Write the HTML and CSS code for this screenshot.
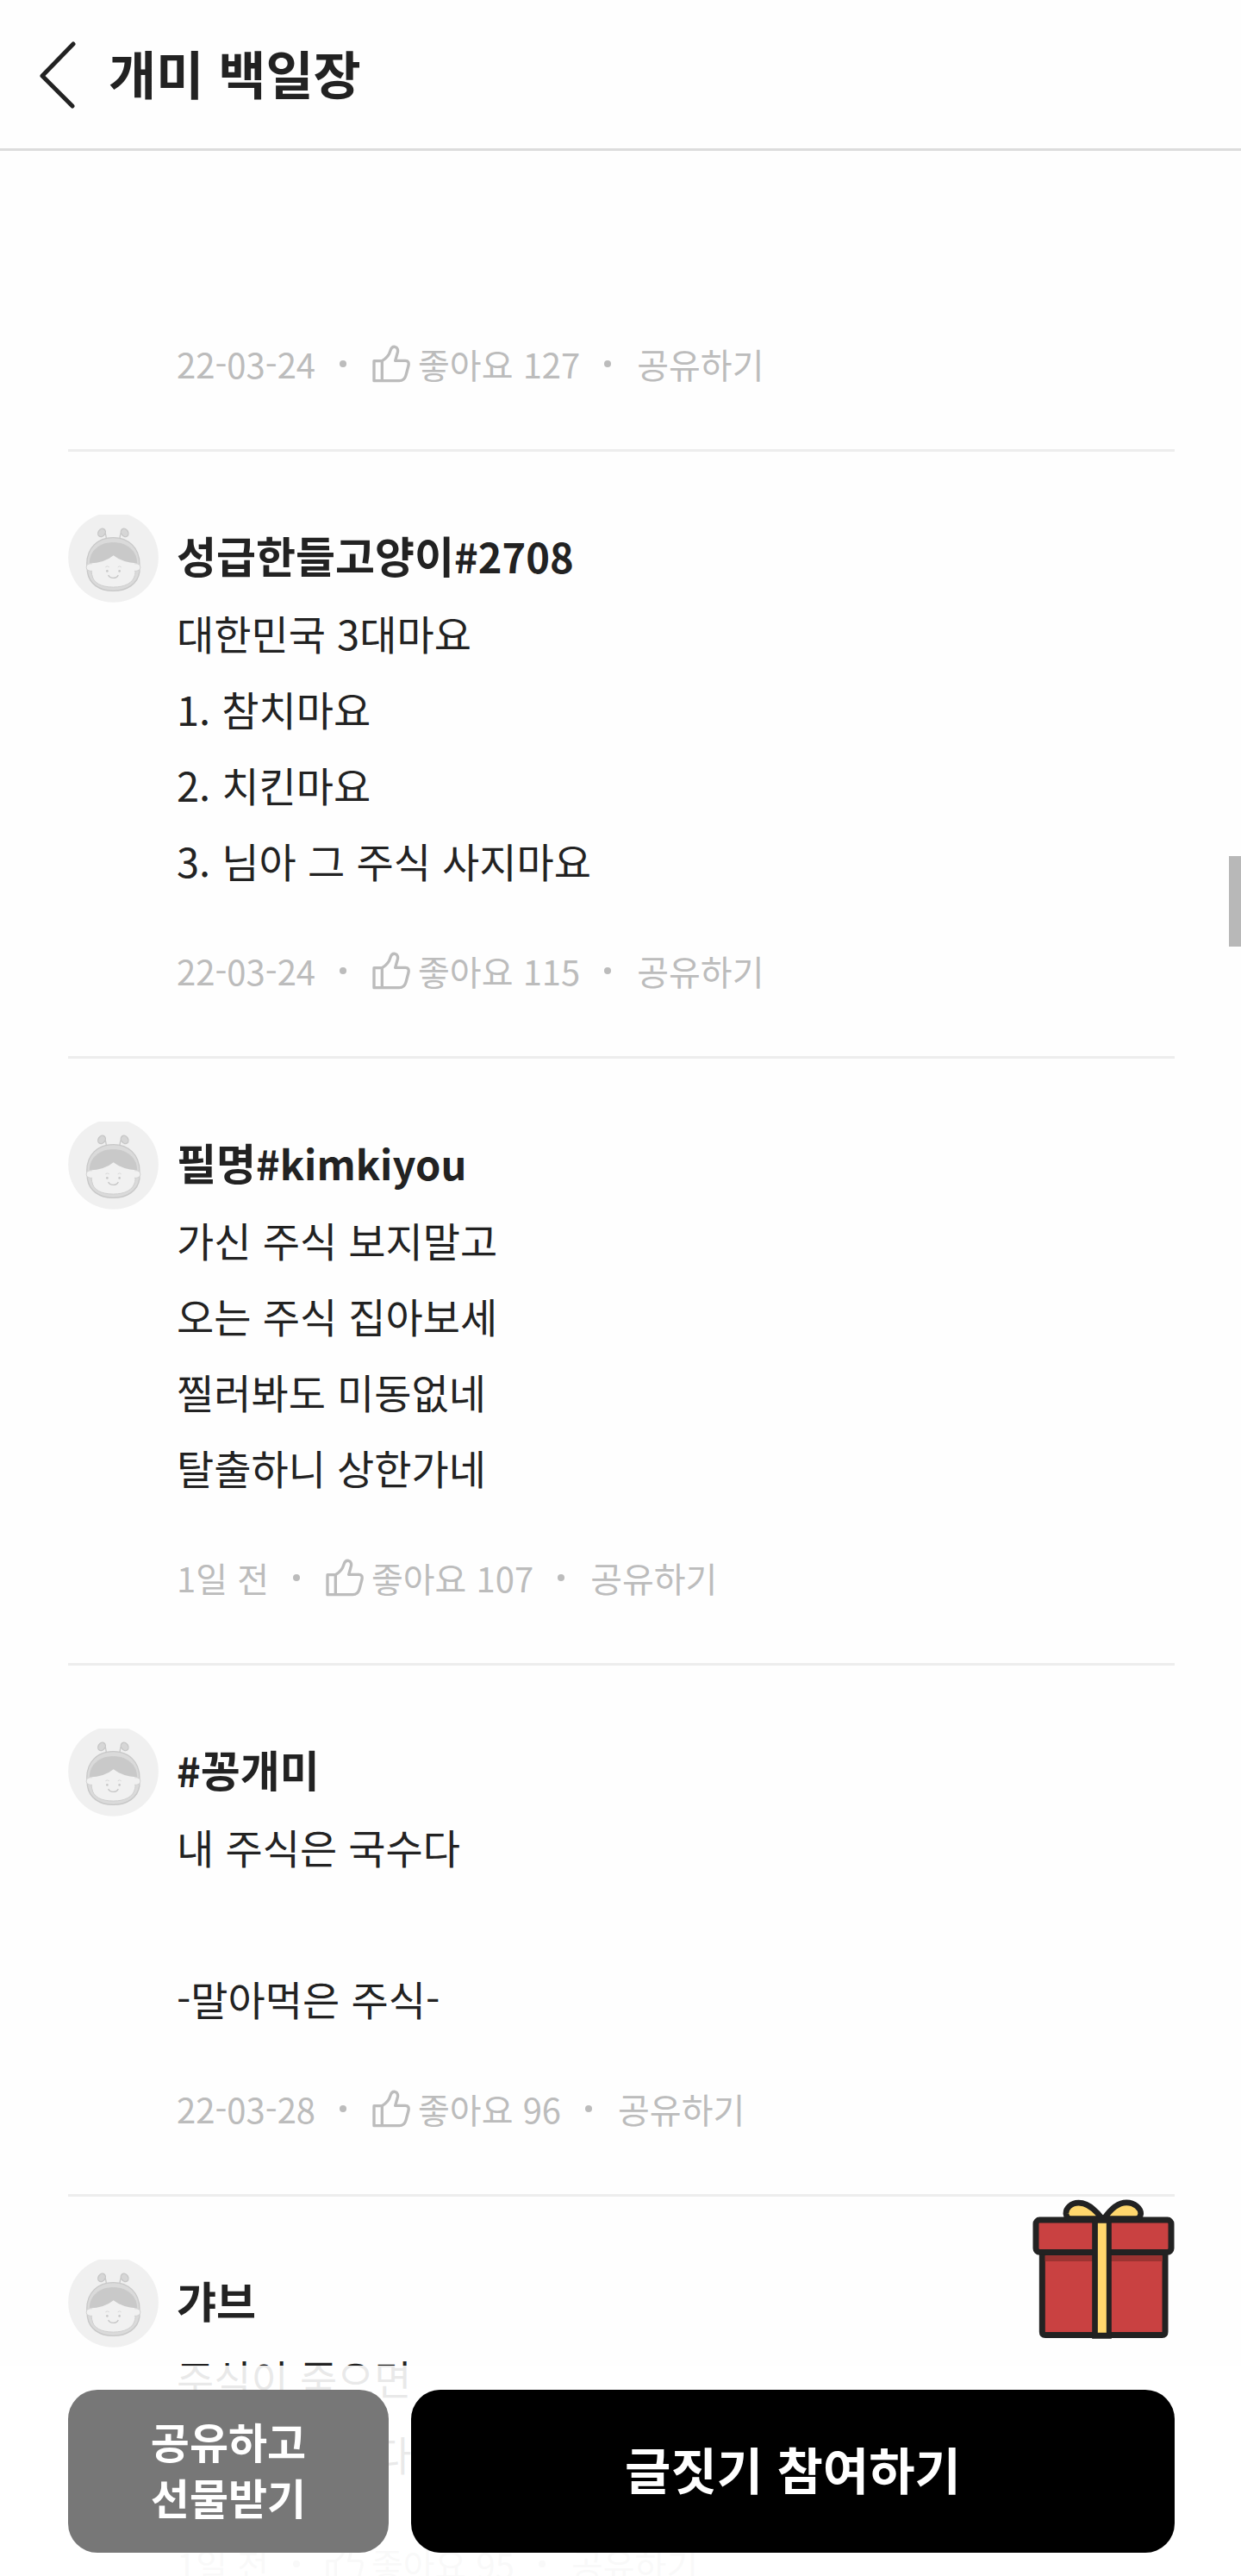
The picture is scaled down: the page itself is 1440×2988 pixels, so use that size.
FILE: index.html
```html
<!DOCTYPE html>
<html lang="ko">
<head>
<meta charset="utf-8">
<meta name="viewport" content="width=device-width, initial-scale=1">
<title>개미 백일장</title>
<link rel="stylesheet" href="styles.css">
</head>
<body>
<svg class="sprite" aria-hidden="true">
  <symbol id="avatar" viewBox="57 80 315 307">
    <circle cx="214.500" cy="229" r="157.500" fill="#f0f0f0"/>
    <path d="M190 170Q190 150 184 140M237 170Q237 150 243 140" fill="none" stroke="#c9c9c9" stroke-width="4"/>
    <ellipse cx="174" cy="143" rx="12" ry="15" transform="rotate(35 174 143)" fill="#d6d6d6" stroke="#c6c6c6" stroke-width="4"/>
    <ellipse cx="254" cy="143" rx="12" ry="15" transform="rotate(-35 254 143)" fill="#d6d6d6" stroke="#c6c6c6" stroke-width="4"/>
    <path d="M122 252C122 196 160 160 214 160S306 196 306 252V280C300 322 262 346 214 346S130 322 124 280Z" fill="#dadada" stroke="#c8c8c8" stroke-width="4"/>
    <path d="M133 250C133 200 170 178 214 178S296 200 296 250L290 290C284 318 256 333 214 333S144 318 140 290Z" fill="#f1f1f1" stroke="#cfcfcf" stroke-width="3"/>
    <path d="M131 250C133 202 170 177 214 177S296 202 298 250Q245 246 215 222Q184 248 131 250Z" fill="#c9c9c9"/>
    <path d="M140 251Q121 249 120 264Q121 277 141 277M289 251Q308 249 309 264Q308 277 288 277" fill="#f1f1f1" stroke="#d2d2d2" stroke-width="3"/>
    <path d="M187 263Q193 257 200 263M230 263Q236 257 242 263" fill="none" stroke="#d6d6d6" stroke-width="3"/>
    <circle cx="193" cy="277" r="4" fill="#c8c8c8"/><circle cx="236" cy="277" r="4" fill="#c8c8c8"/>
    <path d="M197 291Q201 301 214 301T232 291" fill="none" stroke="#c6c6c6" stroke-width="4"/>
  </symbol>
  <symbol id="thumb" viewBox="35 43 132 132">
    <path d="M41 99H69V168H41ZM69 99C83 91 93 82 98 63C101 52 107 49 114 50C123 52 126 62 122 73L115 98H150C160 98 163 105 161 115L152 149C148 163 142 168 129 168H69" fill="none" stroke="#bcbcbc" stroke-width="10" stroke-linejoin="round"/>
  </symbol>
</svg>

<header class="header">
  <a class="back" href="#" aria-label="뒤로 가기">
    <svg width="42" height="78" viewBox="0 0 42 78" aria-hidden="true"><path d="M39 3L3 40L38 75" fill="none" stroke="#222" stroke-width="5" stroke-linecap="round" stroke-linejoin="round"/></svg>
  </a>
  <h1 class="title">개미 백일장</h1>
</header>

<main class="feed">
  <article class="post post-first">
    <div class="content">
      <div class="meta"><time>22-03-24</time><span class="dot"></span><button class="like"><svg class="thumb" aria-hidden="true"><use href="#thumb"/></svg>좋아요 127</button><span class="dot"></span><button>공유하기</button></div>
    </div>
  </article>
  <article class="post">
    <svg class="avatar" aria-hidden="true"><use href="#avatar"/></svg>
    <div class="content">
      <h2 class="name">성급한들고양이<span class="tag">#2708</span></h2>
      <p class="text">대한민국 3대마요<br>1. 참치마요<br>2. 치킨마요<br>3. 님아 그 주식 사지마요</p>
      <div class="meta"><time>22-03-24</time><span class="dot"></span><button class="like"><svg class="thumb" aria-hidden="true"><use href="#thumb"/></svg>좋아요 115</button><span class="dot"></span><button>공유하기</button></div>
    </div>
  </article>
  <article class="post">
    <svg class="avatar" aria-hidden="true"><use href="#avatar"/></svg>
    <div class="content">
      <h2 class="name">필명<span class="tag">#kimkiyou</span></h2>
      <p class="text">가신 주식 보지말고<br>오는 주식 집아보세<br>찔러봐도 미동없네<br>탈출하니 상한가네</p>
      <div class="meta"><time>1일 전</time><span class="dot"></span><button class="like"><svg class="thumb" aria-hidden="true"><use href="#thumb"/></svg>좋아요 107</button><span class="dot"></span><button>공유하기</button></div>
    </div>
  </article>
  <article class="post">
    <svg class="avatar" aria-hidden="true"><use href="#avatar"/></svg>
    <div class="content">
      <h2 class="name"><span class="tag">#</span>꽁개미</h2>
      <p class="text">내 주식은 국수다<br><br>-말아먹은 주식-</p>
      <div class="meta"><time>22-03-28</time><span class="dot"></span><button class="like"><svg class="thumb" aria-hidden="true"><use href="#thumb"/></svg>좋아요 96</button><span class="dot"></span><button>공유하기</button></div>
    </div>
  </article>
  <article class="post">
    <svg class="avatar" aria-hidden="true"><use href="#avatar"/></svg>
    <div class="content">
      <h2 class="name">갸브</h2>
      <p class="text">주식이 죽으면<br>다이 주식이다</p>
      <div class="meta"><time>1일 전</time><span class="dot"></span><button class="like"><svg class="thumb" aria-hidden="true"><use href="#thumb"/></svg>좋아요 95</button><span class="dot"></span><button>공유하기</button></div>
    </div>
  </article>
</main>

<div class="scroll-thumb" aria-hidden="true"></div>

<div class="actions">
  <button class="gift" aria-label="선물">
    <svg width="165" height="164" viewBox="54 60 496 492" aria-hidden="true">
      <path d="M88 250H517V525Q517 536 506 536H99Q88 536 88 525Z" fill="#c94141" stroke="#222" stroke-width="21"/>
      <path d="M98 258H507V279H98Z" fill="#9b3331"/>
      <rect x="66" y="135" width="472" height="112" rx="13" fill="#c94141" stroke="#222" stroke-width="21"/>
      <path d="M297 130C270 94 242 75 215 75C188 75 170 94 171 113Q173 130 188 130ZM304 130C331 90 358 74 382 74C411 74 432 94 432 113Q430 130 414 130Z" fill="#ffd76d" stroke="#222" stroke-width="20" stroke-linejoin="round"/>
      <path d="M262 130H330V549H262Z" fill="#222"/>
      <path d="M282 146H312V528H282Z" fill="#ffd76d"/>
    </svg>
  </button>
  <button class="share">공유하고<br>선물받기</button>
  <button class="join">글짓기 참여하기</button>
</div>
</body>
</html>
```

FILE: styles.css
```css
* {
  box-sizing: border-box;
}

body {
  position: relative;
  display: flex;
  flex-direction: column;
  height: 100vh;
  margin: 0;
  overflow: hidden;
  background: #fefefe;
  color: #222;
  font-family: "Noto Sans CJK KR", sans-serif;
}

h1,
h2,
p {
  margin: 0;
}

button {
  padding: 0;
  border: 0;
  background: none;
  color: inherit;
  font: inherit;
  cursor: pointer;
}

.sprite {
  position: absolute;
  width: 0;
  height: 0;
}

.header {
  display: flex;
  flex: none;
  align-items: center;
  gap: 38px;
  padding: 42px 46px 46px;
  border-bottom: 3px solid #dcdcdc;
}

.back {
  padding-top: 6px;
}

.back svg {
  display: block;
}

.title {
  font-size: 60px;
  line-height: 80px;
  font-weight: 700;
}

.feed {
  flex: 1;
  min-height: 0;
  padding: 0 77px 0 79px;
  overflow-y: auto;
  scrollbar-width: none;
}

.post {
  display: grid;
  grid-template-columns: 105px 1fr;
  column-gap: 21px;
  padding: 73px 0 69px;
  border-bottom: 3px solid #ededed;
}

.post-first {
  padding-top: 163px;
}

.content {
  grid-column: 2;
}

.avatar {
  width: 105px;
  height: 102px;
}

.name {
  height: 93px;
  font-size: 50px;
  line-height: 93px;
  font-weight: 700;
}

.tag {
  font-size: 47px;
}

.text {
  font-size: 47px;
  line-height: 88px;
}

.meta {
  display: flex;
  align-items: center;
  margin-top: 54px;
  color: #bcbcbc;
  font-size: 40px;
  line-height: 60px;
}

.dot {
  width: 8px;
  height: 8px;
  margin: 0 30px 0 28px;
  border-radius: 50%;
  background: #bcbcbc;
}

.like {
  display: flex;
  align-items: center;
  gap: 9px;
}

.thumb {
  width: 44px;
  height: 44px;
}

.scroll-thumb {
  position: absolute;
  top: 993px;
  right: 0;
  width: 14px;
  height: 105px;
  background: #b8b8b8;
}

.actions {
  position: absolute;
  right: 0;
  bottom: 0;
  left: 0;
  display: grid;
  grid-template-columns: 372px 1fr;
  gap: 26px;
  padding: 28px 77px 27px 79px;
  background: rgba(255, 255, 255, 0.9);
}

.share,
.join {
  height: 189px;
  padding-bottom: 7px;
  border-radius: 34px;
  color: #fff;
  font-weight: 700;
}

.share {
  background: #777;
  font-size: 49px;
  line-height: 65px;
}

.join {
  background: #000;
  font-size: 58px;
  line-height: 80px;
}

.gift {
  position: absolute;
  right: 77px;
  bottom: calc(100% + 30px);
}

.gift svg {
  display: block;
}
```
